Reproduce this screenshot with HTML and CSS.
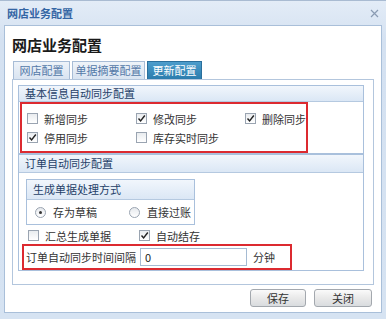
FILE: index.html
```html
<!DOCTYPE html>
<html lang="zh-CN">
<head>
    <meta charset="UTF-8">
    <title>网店业务配置</title>
    <link rel="stylesheet" href="styles.css">
</head>
<body>
    <div class="window">
        <div class="titlebar">
            <span class="title">网店业务配置</span>
            <svg class="close" width="9" height="9" viewBox="0 0 9 9">
                <path d="M1 1 L8 8 M8 1 L1 8" stroke="#8a9bb2" stroke-width="1.2" fill="none"/>
            </svg>
        </div>

        <div class="dialog">
            <h1 class="heading">网店业务配置</h1>

            <div class="tabs">
                <div class="tab tab-shop">网店配置</div>
                <div class="tab tab-summary">单据摘要配置</div>
                <div class="tab tab-update active">更新配置</div>
            </div>

            <div class="panel">
                <!-- 基本信息 -->
                <div class="group group-basic">
                    <div class="group-title">基本信息自动同步配置</div>
                    <div class="mark mark-basic">
                        <div class="check-grid">
                            <label class="check"><span class="box"></span>新增同步</label>
                            <label class="check"><span class="box checked"><svg width="9" height="9" viewBox="0 0 9 9"><path d="M1.5 4.5 L3.6 7 L7.8 1.5" stroke="#222" stroke-width="1.4" fill="none"/></svg></span>修改同步</label>
                            <label class="check"><span class="box checked"><svg width="9" height="9" viewBox="0 0 9 9"><path d="M1.5 4.5 L3.6 7 L7.8 1.5" stroke="#222" stroke-width="1.4" fill="none"/></svg></span>删除同步</label>
                            <label class="check"><span class="box checked"><svg width="9" height="9" viewBox="0 0 9 9"><path d="M1.5 4.5 L3.6 7 L7.8 1.5" stroke="#222" stroke-width="1.4" fill="none"/></svg></span>停用同步</label>
                            <label class="check"><span class="box"></span>库存实时同步</label>
                        </div>
                    </div>
                </div>

                <!-- 订单 -->
                <div class="group group-order">
                    <div class="group-title">订单自动同步配置</div>
                    <div class="group-body">
                        <div class="group group-mode">
                            <div class="group-title">生成单据处理方式</div>
                            <div class="radio-row">
                                <label class="radio radio-first"><span class="dot checked"></span>存为草稿</label>
                                <label class="radio"><span class="dot"></span>直接过账</label>
                            </div>
                        </div>
                        <div class="check-row">
                            <label class="check"><span class="box"></span>汇总生成单据</label>
                            <label class="check"><span class="box checked"><svg width="9" height="9" viewBox="0 0 9 9"><path d="M1.5 4.5 L3.6 7 L7.8 1.5" stroke="#222" stroke-width="1.4" fill="none"/></svg></span>自动结存</label>
                        </div>
                        <div class="mark mark-interval">
                            <span class="field-label">订单自动同步时间间隔</span>
                            <input class="field-input" type="text" value="0">
                            <span class="field-unit">分钟</span>
                        </div>
                    </div>
                </div>
            </div>

            <div class="buttons">
                <button class="btn btn-save">保存</button>
                <button class="btn btn-close">关闭</button>
            </div>
        </div>
    </div>
</body>
</html>
```

FILE: styles.css
```css
body {
    margin: 0;
    padding: 0;
    font-family: "Noto Sans CJK SC", "Noto Sans", sans-serif;
    font-size: 11px;
    color: #333;
    background-color: #d6e3f2;
}
.window {
    width: 386px;
    height: 319px;
    box-sizing: border-box;
    border-top: 1px solid #a9bbd2;
    background: linear-gradient(#e3ecf7, #d4e1f1 40px, #d6e3f2);
}
.titlebar {
    height: 24px;
    padding: 0 7px;
    display: flex;
    align-items: center;
    justify-content: space-between;
}
.title {
    color: #3465a4;
    font-weight: bold;
    font-size: 11px;
}
.dialog {
    margin: 0 4px;
    height: 288px;
    box-sizing: border-box;
    border: 1px solid #a9bfd9;
    background-color: #fff;
    padding: 9px 7px 0 7px;
}
.heading {
    margin: 0;
    font-size: 15px;
    line-height: 20px;
    font-weight: bold;
    color: #1a1a1a;
}
/* tabs */
.tabs {
    display: flex;
    gap: 2px;
    margin: 6px 0 0 1px;
    height: 18px;
}
.tab {
    box-sizing: border-box;
    height: 18px;
    line-height: 16px;
    text-align: center;
    border: 1px solid #a7bcd6;
    border-bottom: none;
    background: linear-gradient(#eef3f9, #d9e4f1);
    color: #5479a8;
}
.tab-shop { width: 57px; }
.tab-summary { width: 73px; }
.tab-update { width: 55px; }
.tab.active {
    background: linear-gradient(#4d9dcc, #2b7cad);
    border-color: #2a6f9c;
    color: #fff;
}
.panel {
    width: 362px;
    height: 206px;
    box-sizing: border-box;
    border: 1px solid #b3c6dd;
    padding: 5px 9px 0 5px;
}
/* groups */
.group {
    border: 1px solid #a9c0dc;
}
.group-title {
    height: 17px;
    line-height: 17px;
    padding-left: 6px;
    border-bottom: 1px solid #b5c9e0;
    background: linear-gradient(#f1f6fc, #dbe7f5);
    color: #253f68;
}
.group-basic .group-title {
    height: 15px;
    line-height: 15px;
}
.mark {
    box-sizing: border-box;
    border: 2px solid #dc2a30;
}
.mark-basic {
    width: 288px;
    margin-left: 1px;
    padding: 5px 0 4px 5px;
}
.check-grid {
    display: grid;
    grid-template-columns: 109px 109px 1fr;
    grid-auto-rows: 19px;
}
.check {
    display: flex;
    align-items: center;
    gap: 6px;
    color: #333;
}
.box {
    width: 11px;
    height: 11px;
    box-sizing: border-box;
    border: 1px solid #9aa4b1;
    background: linear-gradient(#e9ecef, #fff);
    display: flex;
    align-items: center;
    justify-content: center;
}
.group-order {
    border-top: none;
}
.group-order > .group-title {
    border-top: 1px solid #a9c0dc;
}
.group-body {
    padding: 6px 0 0 3px;
}
.group-mode {
    width: 169px;
    margin-left: 4px;
    box-sizing: border-box;
}
.group-mode .group-title {
    height: 19px;
    line-height: 19px;
}
.radio-row {
    height: 24px;
    display: flex;
    align-items: center;
    padding-left: 8px;
}
.radio {
    flex: none;
    display: flex;
    align-items: center;
    gap: 7px;
}
.radio-first {
    width: 94px;
}
.dot {
    width: 11px;
    height: 11px;
    box-sizing: border-box;
    border: 1px solid #9aa4b1;
    border-radius: 50%;
    background: linear-gradient(#e6e9ed, #fff);
    display: flex;
    align-items: center;
    justify-content: center;
}
.dot.checked::after {
    content: "";
    width: 3px;
    height: 3px;
    border-radius: 50%;
    background-color: #333;
}
.check-row {
    margin-top: 2px;
    height: 17px;
    display: flex;
    align-items: center;
    padding-left: 6px;
}
.check-row .check {
    width: 111px;
}
.mark-interval {
    width: 270px;
    height: 26px;
    display: flex;
    align-items: center;
    padding-left: 2px;
}
.field-label {
    width: 114px;
}
.field-input {
    width: 107px;
    height: 18px;
    box-sizing: border-box;
    border: 1px solid #a5bbd3;
    padding: 0 4px;
    font-family: "Noto Sans CJK SC", "Noto Sans", sans-serif;
    font-size: 11px;
    color: #222;
    outline: none;
}
.field-unit {
    margin-left: 6px;
}
/* buttons */
.buttons {
    display: flex;
    justify-content: flex-end;
    gap: 8px;
    margin-top: 4px;
    padding-right: 2px;
}
.btn {
    height: 18px;
    box-sizing: border-box;
    border: 1px solid #a3a8ae;
    border-radius: 3px;
    background: linear-gradient(#fafafa, #e9e9e9 50%, #d9dcdf);
    font-family: "Noto Sans CJK SC", "Noto Sans", sans-serif;
    font-size: 11px;
    color: #333;
    padding: 0;
    line-height: 16px;
}
.btn-save { width: 56px; }
.btn-close { width: 58px; }
```
